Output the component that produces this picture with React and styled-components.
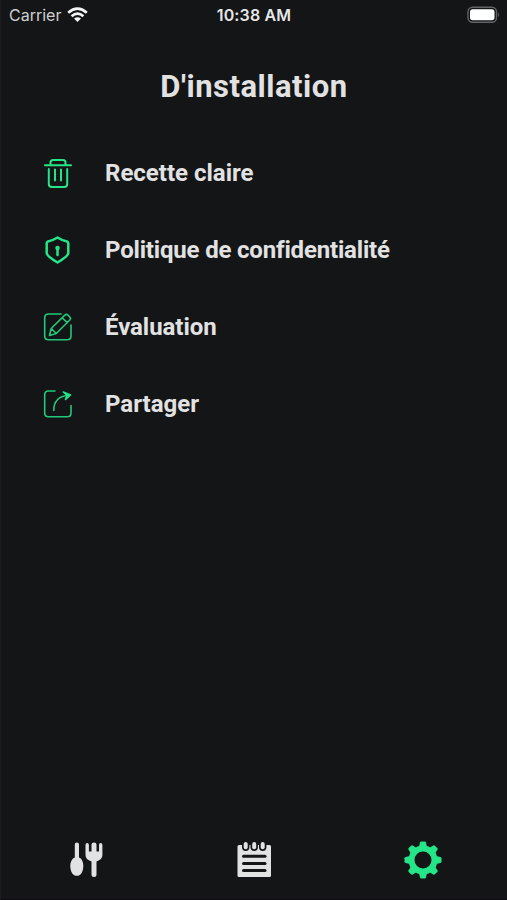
import React from "react";
import styled, { createGlobalStyle } from "styled-components";

const GREEN = "#24e587";
const LIGHT = "#e2e2e3";

const GlobalStyle = createGlobalStyle`
  * { box-sizing: border-box; }
  body { margin: 0; background: #131517; }
`;

const Screen = styled.div`
  width: 507px;
  height: 900px;
  display: flex;
  flex-direction: column;
  background: #131517;
  color: ${LIGHT};
  font-family: Roboto, "Open Sans", sans-serif;
  border-left: 1px solid #1b1d1f;
  border-bottom: 1px solid #0e0a12;
  overflow: hidden;
`;

const StatusBar = styled.header`
  height: 30px;
  flex: none;
  display: grid;
  grid-template-columns: 1fr auto 1fr;
  align-items: center;
  padding: 0 8px 0 8px;
  font-family: Inter, sans-serif;
  font-size: 16px;
`;

const Carrier = styled.div`
  display: flex;
  align-items: center;
  gap: 6px;
  color: #cfcfd0;
  letter-spacing: 0;
`;

const Clock = styled.time`
  font-weight: 600;
  font-size: 16px;
  color: #e6e6e7;
  letter-spacing: 0.15px;
`;

const Battery = styled.svg`
  justify-self: end;
  margin-right: -1px;
`;

const Title = styled.h1`
  margin: 0;
  height: 110px;
  padding-top: 4px;
  display: flex;
  justify-content: center;
  align-items: center;
  font-size: 31px;
  line-height: 36px;
  font-weight: 700;
  letter-spacing: 0.5px;
`;

const Menu = styled.nav`
  flex: 1;
  display: flex;
  flex-direction: column;
  padding: 0 0 0 38px;
  margin-top: -6px;
`;

const Row = styled.a`
  height: 77px;
  display: flex;
  align-items: center;
  gap: 28px;
`;

const RowIcon = styled.svg`
  width: 38px;
  height: 38px;
  flex: none;
  fill: none;
  stroke: ${(p) => (p.$soft ? "#22c978" : GREEN)};
  stroke-width: ${(p) => p.$weight}px;
  stroke-linecap: round;
  stroke-linejoin: round;
`;

const Label = styled.span`
  font-size: 24px;
  line-height: 28px;
  font-weight: 700;
  letter-spacing: ${(p) => p.$tracking}px;
  white-space: nowrap;
`;

const TabBar = styled.footer`
  height: 78px;
  flex: none;
  display: grid;
  grid-template-columns: repeat(3, 1fr);
  justify-items: center;
`;

const TabIcon = styled.svg`
  width: 40px;
  height: 40px;
  margin-top: 19px;
  fill: ${(p) => (p.$active ? GREEN : LIGHT)};
`;

const TrashIcon = () => (
  <RowIcon viewBox="0 0 38 38" $weight={2}>
    <path d="M6 11.2H32M11.5 11V8.5Q11.5 6 14 6H24Q26.5 6 26.5 8.5V11M9.8 15V30Q9.8 33 12.8 33H25.2Q28.2 33 28.2 30V15M16 15.5V26.5M22 15.5V26.5" />
  </RowIcon>
);

const ShieldIcon = () => (
  <RowIcon viewBox="0 0 38 38" $weight={2.5}>
    <path d="M18.5 6.5Q13.5 9.7 9.7 10.2Q7.7 10.6 7.7 12.5V22Q7.7 25 18.5 31.5Q29.3 25 29.3 22V12.5Q29.3 10.6 27.3 10.2Q23.5 9.7 18.5 6.5Z" />
    <circle cx="18.5" cy="17" r="1" />
    <path d="M18.5 18V24" />
  </RowIcon>
);

const EditIcon = () => (
  <RowIcon viewBox="0 0 38 38" $weight={1.6} $soft>
    <path d="M22 6H9.5Q5.7 6 5.7 9.8V28Q5.7 31.8 9.5 31.8H28.2Q32 31.8 32 28V17" />
    <path d="M10.5 27.5L12.2 20.5L25.8 7.1Q27.3 5.7 28.9 7.1L30.8 9Q32.2 10.5 30.8 12L17.3 25.5ZM12.2 20.5L17.3 25.5M23.2 9.7L28.2 14.6" />
  </RowIcon>
);

const ShareIcon = () => (
  <RowIcon viewBox="0 0 38 38" $weight={1.6} $soft>
    <path d="M16 6H9.5Q5.7 6 5.7 9.8V28Q5.7 31.8 9.5 31.8H28.2Q32 31.8 32 28V20.5" />
    <path d="M14.8 25.5C14.5 17 19.5 10.5 30.5 10.2" />
    <path d="M24.3 7L31.5 10L26.5 14.5L28 10.2Z" stroke={GREEN} fill={GREEN} fillOpacity="0.5" />
  </RowIcon>
);

const ITEMS = [
  { label: "Recette claire", Icon: TrashIcon, tracking: 0 },
  { label: "Politique de confidentialité", Icon: ShieldIcon, tracking: -0.18 },
  { label: "Évaluation", Icon: EditIcon, tracking: -0.05 },
  { label: "Partager", Icon: ShareIcon, tracking: 0 },
];

const CutleryIcon = () => (
  <TabIcon viewBox="-1 0 40 40">
    <path d="M8.8 4.5Q8.8 2.5 10.9 2.5Q13 2.5 13 4.5V17.5C16 18.5 17.5 22.5 17.3 26.5C17 32.5 14.5 35.8 10.9 35.8C7.3 35.8 4.5 32.5 4.3 26.5C4.2 22.5 5.8 18.5 8.8 17.5Z" />
    <path d="M19.5 5Q19.5 3 21.2 3Q22.9 3 22.9 5V11.5H25.5V4.5Q25.5 2.5 28 2.5Q30.5 2.5 30.5 4.5V11.5H33V5Q33 3 34.7 3Q36.4 3 36.4 5V15Q36.4 19.5 30.5 21.5V34.5Q30.5 37 28 37Q25.5 37 25.5 34.5V21.5Q19.5 19.5 19.5 15Z" />
  </TabIcon>
);

const NotesIcon = () => (
  <TabIcon viewBox="0 0 40 40">
    <rect x="3.5" y="5" width="33.5" height="32" rx="1.5" />
    <g fill="#131517">
      <rect x="8" y="1" width="7.4" height="10" rx="3.7" />
      <rect x="16.5" y="1" width="7.4" height="10" rx="3.7" />
      <rect x="25" y="1" width="7.4" height="10" rx="3.7" />
      <rect x="8" y="14.8" width="24.5" height="3" rx="1.5" />
      <rect x="8" y="21.9" width="24.5" height="3" rx="1.5" />
      <rect x="8" y="29" width="24.5" height="3" rx="1.5" />
    </g>
    <rect x="9.7" y="2" width="4" height="7.3" rx="2" />
    <rect x="18.2" y="2" width="4" height="7.3" rx="2" />
    <rect x="26.7" y="2" width="4" height="7.3" rx="2" />
  </TabIcon>
);

const TEETH = [0, 45, 90, 135, 180, 225, 270, 315];

const GearIcon = () => (
  <TabIcon viewBox="0 0 40 40" $active>
    <circle cx="20" cy="20" r="11.5" fill="none" stroke={GREEN} strokeWidth="6" />
    {TEETH.map((angle) => (
      <path
        key={angle}
        d="M15.8 8L17 2.6Q17.3 1.5 18.3 1.5H21.7Q22.7 1.5 23 2.6L24.2 8Z"
        transform={`rotate(${angle} 20 20)`}
      />
    ))}
  </TabIcon>
);

export default function App() {
  return (
    <>
      <GlobalStyle />
      <Screen>
        <StatusBar>
          <Carrier>
            Carrier
            <svg width="21" height="16" viewBox="0 0 21 16" fill="none" stroke="#f4f4f4" strokeWidth="2.7">
              <path d="M1.2 5.8Q10.5 -2.4 19.8 5.8M4.6 9.3Q10.5 4 16.4 9.3" />
              <path d="M7 11.6Q10.5 8.8 14 11.6L10.5 15Z" fill="#f4f4f4" stroke="none" />
            </svg>
          </Carrier>
          <Clock>10:38 AM</Clock>
          <Battery width="33" height="18" viewBox="0 0 33 18">
            <rect x="1" y="1.2" width="28.5" height="15" rx="4.5" fill="none" stroke="#626365" strokeWidth="1.4" />
            <rect x="3" y="3.2" width="24.5" height="11" rx="2.7" fill="#fff" />
            <path d="M31 6.3Q33 8.7 31 11.1Z" fill="#626365" />
          </Battery>
        </StatusBar>
        <Title>D'installation</Title>
        <Menu>
          {ITEMS.map(({ label, Icon, tracking }) => (
            <Row key={label}>
              <Icon />
              <Label $tracking={tracking}>{label}</Label>
            </Row>
          ))}
        </Menu>
        <TabBar>
          <CutleryIcon />
          <NotesIcon />
          <GearIcon />
        </TabBar>
      </Screen>
    </>
  );
}
